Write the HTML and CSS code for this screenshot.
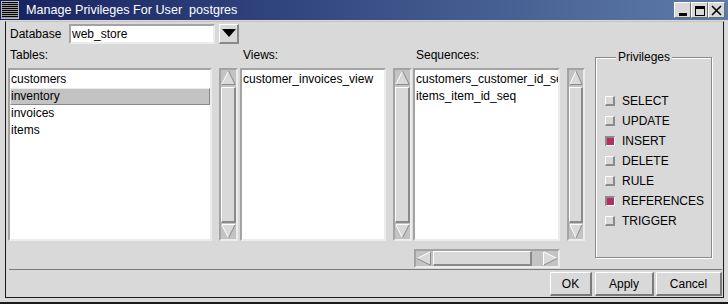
FILE: index.html
```html
<html>
<head>
	<link rel="stylesheet" href="styles.css">
	<title>Manage Privileges For User postgres</title>
</head>
<body>
<div class="window">
	<div class="titlebar">
		<div class="menu-icon"></div>
		<div class="title">Manage Privileges For User  postgres</div>
		<div class="wm-buttons">
			<span class="wm-btn"><svg width="15" height="14" viewBox="0 0 15 14"><rect x="4" y="10" width="8" height="3" fill="#000"/></svg></span>
			<span class="wm-btn"><svg width="15" height="14" viewBox="0 0 15 14"><rect x="3.5" y="3.5" width="9" height="9" fill="none" stroke="#000"/><rect x="3" y="3" width="10" height="3" fill="#000"/></svg></span>
			<span class="wm-btn"><svg width="15" height="14" viewBox="0 0 15 14"><path d="M3 3 L12 12 M12 3 L3 12" stroke="#000" stroke-width="1.6"/></svg></span>
		</div>
	</div>
	<div class="frame">
		<div class="db-row">
			<span class="db-label">Database</span>
			<div class="entry">web_store</div>
			<div class="combo-btn"><svg width="14" height="9" viewBox="0 0 14 9"><path d="M0 0 H14 L7 8 Z" fill="#000"/></svg></div>
		</div>

		<div class="lists">
			<div class="col col-tables">
				<div class="col-label">Tables:</div>
				<div class="listbox">
					<div class="item">customers</div>
					<div class="item selected">inventory</div>
					<div class="item">invoices</div>
					<div class="item">items</div>
				</div>
			</div>
			<div class="vscroll sb-1">
				<svg class="arrow" width="15" height="15" viewBox="0 0 15 15"><path d="M7.5 1 L1 14 L14 14 Z" fill="#d9d9d9"/><path d="M7.5 1 L1 14" stroke="#fff"/><path d="M7.5 1 L14 14 M1 14.5 H14.5" stroke="#8a8a8a"/></svg>
				<div class="thumb"></div>
				<svg class="arrow" width="15" height="15" viewBox="0 0 15 15"><path d="M7.5 14 L1 1 L14 1 Z" fill="#d9d9d9"/><path d="M7.5 14 L1 1 M1 0.5 H14" stroke="#fff"/><path d="M7.5 14 L14 1" stroke="#8a8a8a"/></svg>
			</div>

			<div class="col col-views">
				<div class="col-label">Views:</div>
				<div class="listbox">
					<div class="item">customer_invoices_view</div>
				</div>
			</div>
			<div class="vscroll sb-2">
				<svg class="arrow" width="15" height="15" viewBox="0 0 15 15"><path d="M7.5 1 L1 14 L14 14 Z" fill="#d9d9d9"/><path d="M7.5 1 L1 14" stroke="#fff"/><path d="M7.5 1 L14 14 M1 14.5 H14.5" stroke="#8a8a8a"/></svg>
				<div class="thumb"></div>
				<svg class="arrow" width="15" height="15" viewBox="0 0 15 15"><path d="M7.5 14 L1 1 L14 1 Z" fill="#d9d9d9"/><path d="M7.5 14 L1 1 M1 0.5 H14" stroke="#fff"/><path d="M7.5 14 L14 1" stroke="#8a8a8a"/></svg>
			</div>

			<div class="col col-seq">
				<div class="col-label">Sequences:</div>
				<div class="listbox">
					<div class="item">customers_customer_id_seq</div>
					<div class="item">items_item_id_seq</div>
				</div>
				<div class="hscroll">
					<svg class="arrow" width="15" height="15" viewBox="0 0 15 15"><path d="M1 7.5 L14 1 L14 14 Z" fill="#d9d9d9"/><path d="M1 7.5 L14 1" stroke="#fff"/><path d="M1 7.5 L14 14 M14.5 1 V14.5" stroke="#8a8a8a"/></svg>
					<div class="hthumb"></div>
					<div class="htrough"></div>
					<svg class="arrow" width="15" height="15" viewBox="0 0 15 15"><path d="M14 7.5 L1 1 L1 14 Z" fill="#d9d9d9"/><path d="M14 7.5 L1 1 M0.5 1 V14" stroke="#fff"/><path d="M14 7.5 L1 14" stroke="#8a8a8a"/></svg>
				</div>
			</div>
			<div class="vscroll sb-3">
				<svg class="arrow" width="14" height="15" viewBox="0 0 14 15"><path d="M7 1 L1 14 L13 14 Z" fill="#d9d9d9"/><path d="M7 1 L1 14" stroke="#fff"/><path d="M7 1 L13 14 M1 14.5 H13.5" stroke="#8a8a8a"/></svg>
				<div class="thumb"></div>
				<svg class="arrow" width="14" height="15" viewBox="0 0 14 15"><path d="M7 14 L1 1 L13 1 Z" fill="#d9d9d9"/><path d="M7 14 L1 1 M1 0.5 H13" stroke="#fff"/><path d="M7 14 L13 1" stroke="#8a8a8a"/></svg>
			</div>

			<div class="group">
				<span class="group-title">Privileges</span>
				<div class="check"><span class="box"></span>SELECT</div>
				<div class="check"><span class="box"></span>UPDATE</div>
				<div class="check"><span class="box on"></span>INSERT</div>
				<div class="check"><span class="box"></span>DELETE</div>
				<div class="check"><span class="box"></span>RULE</div>
				<div class="check"><span class="box on"></span>REFERENCES</div>
				<div class="check"><span class="box"></span>TRIGGER</div>
			</div>
		</div>

		<div class="separator"></div>

		<div class="buttons">
			<button class="btn btn-ok">OK</button>
			<button class="btn btn-apply">Apply</button>
			<button class="btn btn-cancel">Cancel</button>
		</div>
	</div>
</div>
</body>
</html>
```

FILE: styles.css
```css
body {
	margin: 0;
	font-family: "Liberation Sans", Arial, sans-serif;
	font-size: 12px;
	color: #000;
}
.window {
	width: 728px;
	height: 304px;
	box-sizing: border-box;
	background-color: #d9d9d9;
	border-bottom: 2px solid #1a1a1a;
	overflow: hidden;
}

/* title bar */
.titlebar {
	height: 20px;
	display: flex;
	align-items: center;
	background: linear-gradient(to right, #162260, #5d7caa);
}
.menu-icon {
	width: 16px;
	height: 16px;
	margin-left: 1px;
	border: 1px solid #b8b8b8;
	background: repeating-linear-gradient(to bottom, #000 0, #000 1px, #9a9a9a 1px, #9a9a9a 2px);
}
.title {
	margin-left: 7px;
	color: #fff;
	font-size: 12.6px;
	white-space: pre;
	flex: 1;
}
.wm-buttons {
	display: flex;
	margin-right: 3px;
}
.wm-btn {
	width: 15px;
	height: 14px;
	border: 1px solid;
	border-color: #fff #6e6e6e #6e6e6e #fff;
	background-color: #d9d9d9;
	display: flex;
}

/* main frame */
.frame {
	margin: 1px 0 0 5px;
	width: 719px;
	height: 277px;
	box-sizing: border-box;
	border: 1px solid #1a1a1a;
	border-top-color: #c4c4c4;
	padding: 2px 1px 0 2px;
	display: flex;
	flex-direction: column;
}
.db-row {
	display: flex;
	align-items: center;
	height: 20px;
	padding-left: 2px;
}
.db-label {
	width: 59px;
}
.entry {
	width: 146px;
	height: 20px;
	box-sizing: border-box;
	border: 2px solid;
	border-color: #a3a3a3 #ececec #ececec #a3a3a3;
	background-color: #fff;
	padding-left: 1px;
	line-height: 16px;
}
.combo-btn {
	width: 20px;
	height: 20px;
	margin-left: 4px;
	box-sizing: border-box;
	border: 1px solid;
	border-width: 1px 2px 2px 1px;
	border-color: #fff #8a8a8a #8a8a8a #fff;
	display: flex;
	align-items: center;
	justify-content: center;
}

/* lists */
.lists {
	display: flex;
	margin-top: 4px;
	height: 221px;
}
.col-label {
	height: 20px;
	line-height: 14px;
	padding-left: 2px;
}
.col-tables { width: 204px; }
.col-views { width: 146px; margin-left: 2px; }
.col-views .col-label { padding-left: 3px; }
.col-seq { width: 147px; margin-left: 1px; }
.col-seq .col-label { padding-left: 3px; }

.listbox {
	height: 173px;
	box-sizing: border-box;
	border: 2px solid;
	border-color: #a3a3a3 #ececec #ececec #a3a3a3;
	background-color: #fff;
	padding-top: 1px;
	overflow: hidden;
}
.item {
	height: 17px;
	line-height: 16px;
	padding-left: 1px;
	white-space: nowrap;
	box-sizing: border-box;
}
.item.selected {
	background-color: #c3c3c3;
	border: 1px solid;
	border-color: #ececec #8a8a8a #8a8a8a #ececec;
	padding-left: 0;
	line-height: 14px;
}

.vscroll {
	margin-top: 20px;
	width: 19px;
	height: 173px;
	box-sizing: border-box;
	border: 2px solid;
	border-color: #a3a3a3 #ececec #ececec #a3a3a3;
	background-color: #c3c3c3;
	display: flex;
	flex-direction: column;
}
.sb-1 { margin-left: 7px; }
.sb-2 { margin-left: 7px; }
.sb-3 { margin-left: 7px; width: 18px; }
.arrow { display: block; flex: none; }
.thumb {
	flex: 1;
	margin: 2px 0 1px;
	border: 1px solid;
	border-width: 1px 2px 2px 1px;
	border-color: #fff #8a8a8a #8a8a8a #fff;
	background-color: #d9d9d9;
}

.hscroll {
	margin: 8px 0 0 1px;
	width: 146px;
	height: 19px;
	box-sizing: border-box;
	border: 2px solid;
	border-color: #a3a3a3 #ececec #ececec #a3a3a3;
	background-color: #c3c3c3;
	display: flex;
}
.hthumb {
	width: 96px;
	margin-left: 2px;
	border: 1px solid;
	border-width: 1px 2px 2px 1px;
	border-color: #fff #8a8a8a #8a8a8a #fff;
	background-color: #d9d9d9;
}
.htrough { flex: 1; }

/* privileges */
.group {
	position: relative;
	margin: 9px 0 0 10px;
	width: 117px;
	height: 201px;
	box-sizing: border-box;
	border: 1px solid #8a8a8a;
	box-shadow: inset 1px 1px 0 #fff, 1px 1px 0 #fff;
	padding: 33px 0 0 9px;
}
.group-title {
	position: absolute;
	top: -8px;
	left: 20px;
	padding: 0 2px;
	line-height: 14px;
	background-color: #d9d9d9;
}
.check {
	height: 20px;
	display: flex;
	align-items: center;
}
.box {
	width: 10px;
	height: 10px;
	box-sizing: border-box;
	margin-right: 7px;
	border: 1px solid;
	border-width: 1px 2px 2px 1px;
	border-color: #fff #8a8a8a #8a8a8a #fff;
	background-color: #d9d9d9;
}
.box.on {
	border-width: 2px 1px 1px 2px;
	border-color: #8a8a8a #fff #fff #8a8a8a;
	background-color: #b03060;
}

/* bottom */
.separator {
	margin-left: 1px;
	height: 1px;
	background-color: #7a7a7a;
}
.buttons {
	display: flex;
	justify-content: flex-end;
	margin-top: 2px;
	height: 24px;
}
.btn {
	height: 24px;
	padding: 0;
	font-family: "Liberation Sans", Arial, sans-serif;
	font-size: 12px;
	color: #000;
	background-color: #d9d9d9;
	border: 1px solid;
	border-width: 1px 2px 2px 1px;
	border-color: #fff #7a7a7a #7a7a7a #fff;
}
.btn-ok { width: 42px; }
.btn-apply { width: 59px; margin-left: 3px; }
.btn-cancel { width: 66px; margin-left: 2px; }
```
